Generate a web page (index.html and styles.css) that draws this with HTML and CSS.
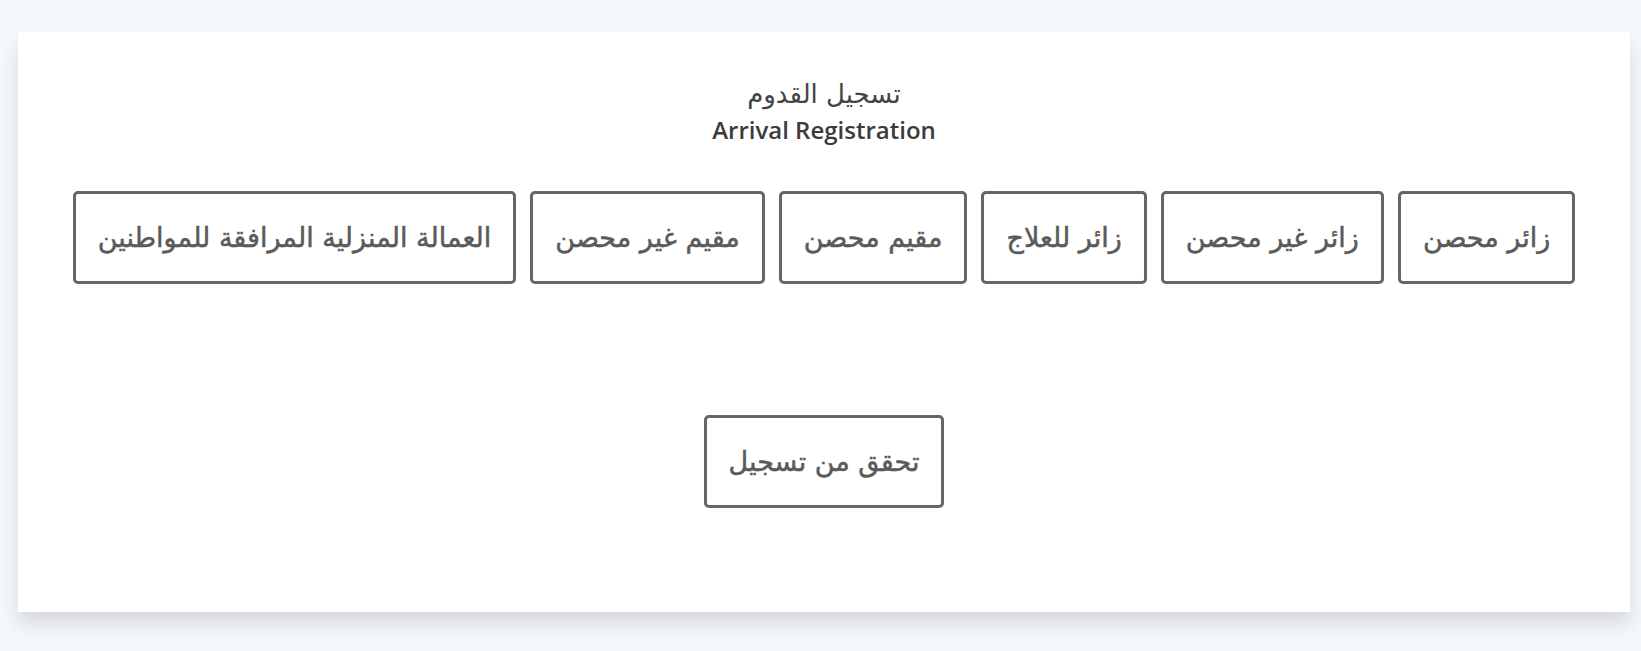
FILE: index.html
```html
<!DOCTYPE html>
<html lang="ar">
<head>
  <meta charset="UTF-8">
  <title>تسجيل القدوم</title>
  <link rel="stylesheet" href="styles.css">
</head>
<body>
<div class="page">
  <div class="card">
    <div class="head">
      <h1 class="title-ar">تسجيل القدوم</h1>
      <h2 class="title-en">Arrival Registration</h2>
    </div>
    <div class="types">
      <button class="btn">زائر محصن</button>
      <button class="btn">زائر غير محصن</button>
      <button class="btn">زائر للعلاج</button>
      <button class="btn">مقيم محصن</button>
      <button class="btn">مقيم غير محصن</button>
      <button class="btn">العمالة المنزلية المرافقة للمواطنين</button>
    </div>
    <div class="check">
      <button class="btn">تحقق من تسجيل</button>
    </div>
  </div>
</div>
</body>
</html>
```

FILE: styles.css
```css
* {
  margin: 0;
  padding: 0;
  box-sizing: border-box;
}

body {
  background: #f4f7fb;
  font-family: "DejaVu Sans", "Noto Sans", sans-serif;
}

.page {
  padding: 32px 11px 39px 18px;
}

.card {
  height: 580px;
  background: #fff;
  box-shadow: 0 12px 18px rgba(0, 0, 0, 0.12);
  padding-top: 45px;
  text-align: center;
}

.head {
  color: #3c3c3c;
}

.title-ar {
  font-family: "DejaVu Sans", sans-serif;
  font-size: 26px;
  font-weight: normal;
  line-height: 34px;
  color: #444;
}

.title-en {
  margin-top: 3px;
  font-family: "Open Sans", "Noto Sans", sans-serif;
  font-size: 24px;
  font-weight: 600;
  line-height: 32px;
}

.types {
  direction: rtl;
  display: flex;
  justify-content: center;
  gap: 14px;
  margin-top: 45px;
}

.btn {
  height: 93px;
  padding: 0 22px;
  border: 3px solid #666;
  border-radius: 5px;
  background: #fff;
  color: #5a5a5a;
  font-family: "DejaVu Sans", sans-serif;
  font-size: 27px;
  font-weight: normal;
  -webkit-text-stroke: 0.5px #5a5a5a;
  cursor: pointer;
}

.check {
  margin-top: 131px;
}
```
